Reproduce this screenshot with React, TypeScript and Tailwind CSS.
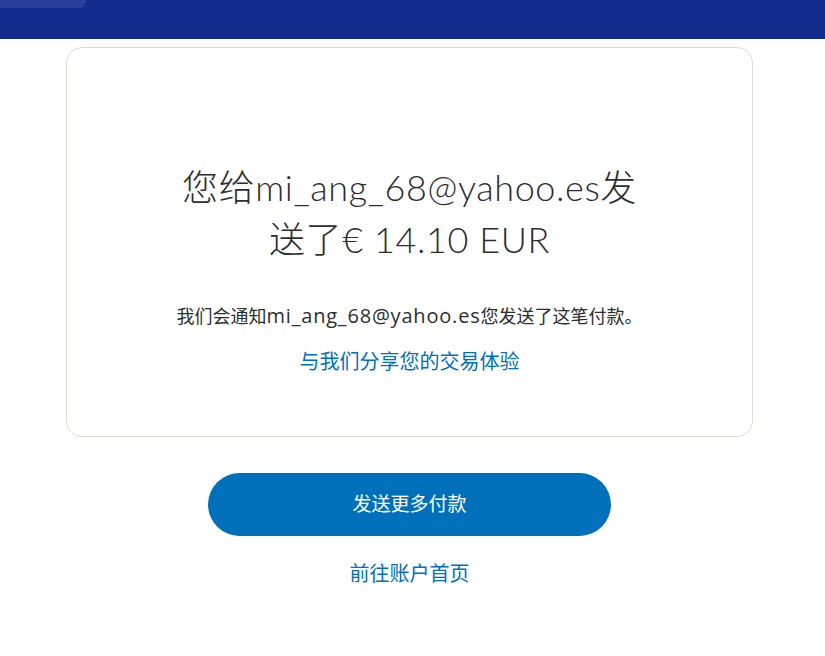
const font = "font-['Lato','Noto_Sans_CJK_SC',sans-serif]";

export default function App() {
  return (
    <div className={`min-h-screen bg-white text-[#2c2e2f] ${font}`}>
      {/* top bar */}
      <div className="relative h-[39px] overflow-hidden bg-[#142c8e]">
        <div className="absolute left-0 top-0 h-[8px] w-[86px] rounded-br-[14px] bg-[#2a3f99]" />
      </div>

      <div className="ml-[66px] flex w-[687px] flex-col items-center">
        {/* result card */}
        <div className="mt-2 flex w-full flex-col items-center rounded-2xl border border-[#dcdcd4] pb-[60px] pt-[113px] text-center">
          <h1 className="max-w-[472px] text-[36px] font-light leading-[52px] tracking-[0.6px]">
            您给mi_ang_68@yahoo.es发送了€ 14.10 EUR
          </h1>
          <p className="mt-[38px] h-[27px] font-['Open_Sans','Noto_Sans_CJK_SC',sans-serif] text-[18px] leading-[27px]">
            我们会通知<span className="text-[20px] leading-none tracking-[0.8px]">mi_ang_68@yahoo.es</span>您发送了这笔付款。
          </p>
          <a href="#" className="mt-[16px] text-[20px] leading-[30px] text-[#0070ba]">
            与我们分享您的交易体验
          </a>
        </div>

        <button className="mt-[36px] h-[63px] w-[403px] rounded-full bg-[#0070ba] text-[19px] text-white">
          发送更多付款
        </button>
        <a href="#" className="mt-[22px] text-[20px] leading-[30px] text-[#0070ba]">
          前往账户首页
        </a>
      </div>
    </div>
  );
}
